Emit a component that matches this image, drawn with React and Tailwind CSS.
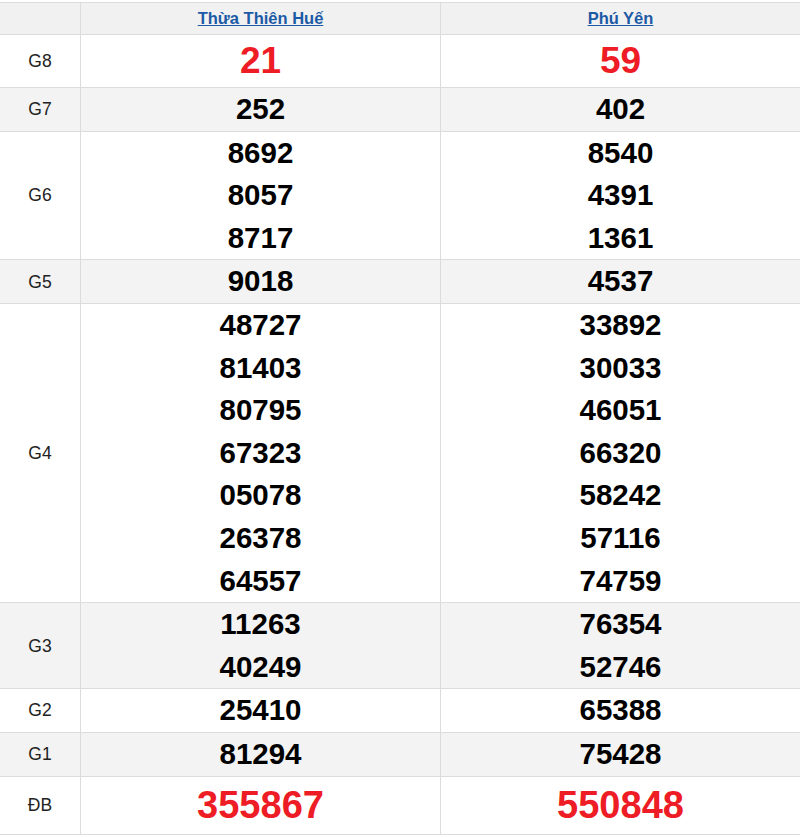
const ROWS = [
  { label: "G8", a: ["21"], b: ["59"], big: "g8" },
  { label: "G7", a: ["252"], b: ["402"] },
  { label: "G6", a: ["8692", "8057", "8717"], b: ["8540", "4391", "1361"] },
  { label: "G5", a: ["9018"], b: ["4537"] },
  {
    label: "G4",
    a: ["48727", "81403", "80795", "67323", "05078", "26378", "64557"],
    b: ["33892", "30033", "46051", "66320", "58242", "57116", "74759"],
  },
  { label: "G3", a: ["11263", "40249"], b: ["76354", "52746"] },
  { label: "G2", a: ["25410"], b: ["65388"] },
  { label: "G1", a: ["81294"], b: ["75428"] },
  { label: "ĐB", a: ["355867"], b: ["550848"], big: "db" },
];

function Cell({ nums, big }) {
  if (big === "g8") {
    return (
      <div className="border-l border-[#dcdcdc] flex items-center justify-center h-[52px] text-[37px] font-bold text-[#ee1c25]">
        {nums[0]}
      </div>
    );
  }
  if (big === "db") {
    return (
      <div className="border-l border-[#dcdcdc] flex items-center justify-center h-[57px] text-[38px] font-bold text-[#ee1c25]">
        {nums[0]}
      </div>
    );
  }
  return (
    <div className="border-l border-[#dcdcdc] flex flex-col items-center text-[29.5px] font-bold text-black leading-[42.6px]">
      {nums.map((n, i) => (
        <div key={i}>{n}</div>
      ))}
    </div>
  );
}

export default function App() {
  return (
    <div className="w-[800px] h-[837px] bg-white pt-[2px]" style={{ fontFamily: "'Liberation Sans', Arial, sans-serif" }}>
      <div className="border-t border-b border-[#dcdcdc]">
        {/* header */}
        <div className="grid grid-cols-[80px_1fr_1fr] bg-[#f1f1f1] h-[32px] border-b border-[#dcdcdc]">
          <div />
          <div className="border-l border-[#dcdcdc] flex items-center justify-center">
            <span className="text-[16.5px] font-bold text-[#1c5aa6] underline">Thừa Thiên Huế</span>
          </div>
          <div className="border-l border-[#dcdcdc] flex items-center justify-center">
            <span className="text-[16.5px] font-bold text-[#1c5aa6] underline">Phú Yên</span>
          </div>
        </div>
        {ROWS.map((r, i) => (
          <div
            key={r.label}
            className={`grid grid-cols-[80px_1fr_1fr] ${i < ROWS.length - 1 ? "border-b border-[#dcdcdc]" : ""} ${i % 2 === 1 ? "bg-[#f3f3f3]" : "bg-white"}`}
          >
            <div className="flex items-center justify-center text-[17.5px] text-[#222]">{r.label}</div>
            <Cell nums={r.a} big={r.big} />
            <Cell nums={r.b} big={r.big} />
          </div>
        ))}
      </div>
    </div>
  );
}
